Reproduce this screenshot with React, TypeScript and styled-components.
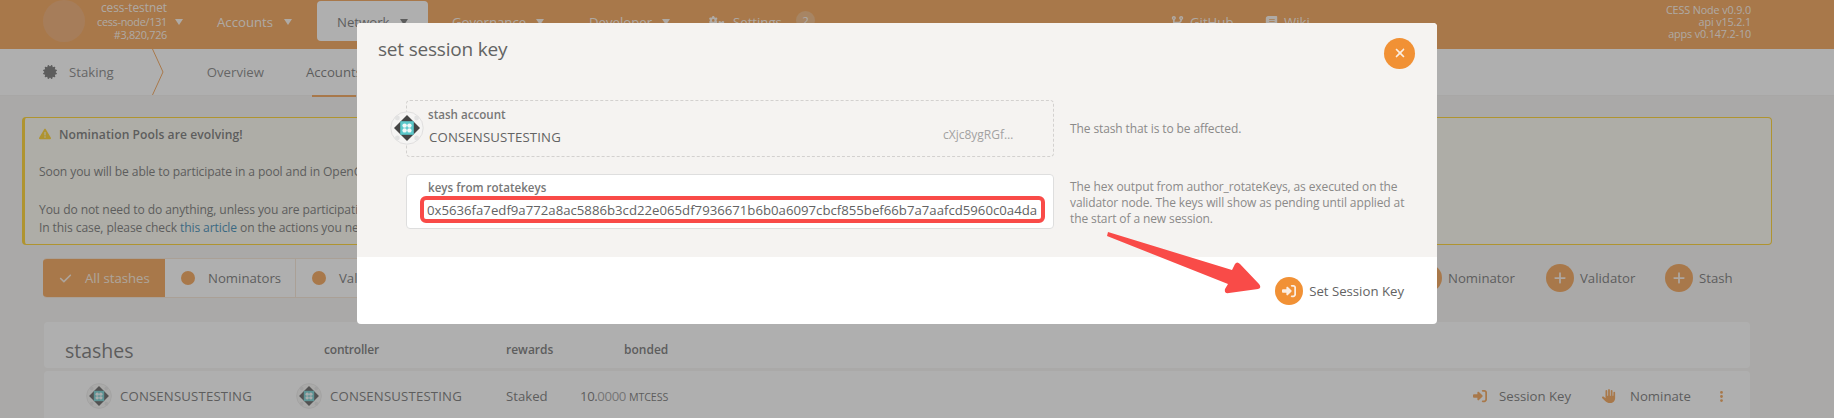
import React from 'react';
import styled, { createGlobalStyle } from 'styled-components';
import {
  FaCheck, FaCodeBranch, FaBook, FaGears, FaCertificate, FaTriangleExclamation,
  FaRightToBracket, FaHand, FaEllipsisVertical, FaPlus, FaXmark,
} from 'react-icons/fa6';

const orange = '#f19135';

const GlobalStyle = createGlobalStyle`
  * { box-sizing: border-box; }
  body {
    margin: 0;
    font-family: 'Open Sans', 'Noto Sans', sans-serif;
    font-size: 13.2px;
    color: #5a5a5a;
    background: #f5f3f1;
    overflow: hidden;
  }
  svg { display: block; flex: none; }
`;

const Page = styled.div`
  position: relative;
  width: 1834px;
  height: 418px;
  overflow: hidden;
  background: #f5f3f1;
  white-space: nowrap;
`;

const Label = styled.span<{ $w?: number; $ls?: number; $size?: number; $bold?: boolean }>`
  flex: none;
  width: ${p => (p.$w ? `${p.$w}px` : 'auto')};
  letter-spacing: ${p => p.$ls ?? 0}px;
  font-size: ${p => p.$size ?? 13.2}px;
  font-weight: ${p => (p.$bold ? 600 : 400)};
`;

/* ---- top bar ---- */
const TopBar = styled.header`
  display: flex;
  height: 49px;
  padding-left: 43px;
  background: ${orange};
  color: rgba(255, 255, 255, 0.9);
`;
const Logo = styled.div`
  width: 42px;
  height: 42px;
  border-radius: 50%;
  background: #ed9b55;
`;
const ChainInfo = styled.div`
  width: 82px;
  padding-top: 1px;
  text-align: right;
  font-size: 10.9px;
  letter-spacing: -0.3px;
  line-height: 13.5px;
`;
const ChainName = styled.div`
  font-size: 11.8px;
  letter-spacing: 0;
`;
const Nav = styled.nav`
  display: flex;
  flex: 1;
  height: 43px;
  padding-top: 1px;
`;
const NavItem = styled.div<{ $ml?: number; $w?: number; $gap?: number; $active?: boolean }>`
  display: flex;
  align-items: center;
  gap: ${p => p.$gap ?? 0}px;
  height: ${p => (p.$active ? 40 : 42)}px;
  margin-left: ${p => p.$ml ?? 0}px;
  width: ${p => (p.$w ? `${p.$w}px` : 'auto')};
  padding-left: ${p => (p.$active ? 20 : 0)}px;
  padding-top: ${p => (p.$active ? 2 : 0)}px;
  border-radius: 4px;
  background: ${p => (p.$active ? '#fff' : 'transparent')};
  color: ${p => (p.$active ? '#5a5a5a' : 'inherit')};
`;
const Caret = styled.i`
  flex: none;
  border: solid transparent;
  border-width: 6px 4.5px 0;
  border-top-color: currentColor;
`;
const Badge = styled.span`
  width: 19px;
  height: 19px;
  margin: -4px 0 0 6px;
  border-radius: 50%;
  background: #eeab68;
  font-size: 11.5px;
  line-height: 19px;
  text-align: center;
`;
const Versions = styled.div`
  width: 120px;
  margin-right: 83px;
  padding-top: 4px;
  text-align: right;
  font-size: 10.8px;
  letter-spacing: -0.13px;
  line-height: 12px;
`;

/* ---- tabs ---- */
const TabBar = styled.div`
  display: flex;
  align-items: center;
  height: 47px;
  padding-left: 43px;
  background: #fff;
  border-bottom: 1px solid #f0eeec;
`;
const Tab = styled.div<{ $ml: number; $active?: boolean }>`
  position: relative;
  margin-left: ${p => p.$ml}px;
  color: ${p => (p.$active ? '#5a5a5a' : '#6b6b6b')};
  line-height: 46px;
  &::after {
    content: '';
    display: ${p => (p.$active ? 'block' : 'none')};
    position: absolute;
    left: 6px;
    right: 6px;
    bottom: -2px;
    height: 2px;
    background: ${orange};
  }
`;

/* ---- warning ---- */
const Banner = styled.article`
  width: 1750px;
  height: 128px;
  margin: 21px 0 0 22px;
  padding: 7px 0 0 14px;
  border: 1px solid #ffc800;
  border-left-width: 3px;
  border-radius: 4px;
  background: #fcfaee;
  font-size: 12.1px;
`;
const BannerLine = styled.p<{ $gap?: number }>`
  display: flex;
  align-items: center;
  height: 18px;
  margin: ${p => p.$gap ?? 0}px 0 0;
  letter-spacing: -0.11px;
  white-space: pre;
`;
const Link = styled.a`
  color: #1373a5;
`;

/* ---- filters ---- */
const Toolbar = styled.div`
  display: flex;
  align-items: center;
  justify-content: space-between;
  height: 40px;
  margin: 13px 102px 0 43px;
`;
const Filters = styled.div`
  display: flex;
  height: 40px;
  border-radius: 4px;
  border: solid #f5e0cc;
  border-width: 1px 1px 1px 0;
  background: #fff;
  overflow: hidden;
`;
const Filter = styled.div<{ $w: number; $on?: boolean }>`
  display: flex;
  align-items: center;
  gap: 13px;
  width: ${p => p.$w}px;
  padding-left: 16px;
  border-right: ${p => (p.$on ? 0 : 1)}px solid #f5e0cc;
  background: ${p => (p.$on ? orange : '#fff')};
  color: ${p => (p.$on ? '#fbe9d8' : 'inherit')};
`;
const Dot = styled.i`
  width: 14px;
  height: 14px;
  border-radius: 50%;
  background: ${orange};
`;
const Actions = styled.div`
  display: flex;
`;
const Action = styled.div<{ $w: number }>`
  display: flex;
  align-items: center;
  gap: 6px;
  width: ${p => p.$w}px;
`;
const RoundIcon = styled.span<{ $size?: number }>`
  display: flex;
  flex: none;
  align-items: center;
  justify-content: center;
  width: ${p => p.$size ?? 28}px;
  height: ${p => p.$size ?? 28}px;
  border-radius: 50%;
  background: ${orange};
  color: #fbeee2;
`;

/* ---- table ---- */
const TableRow = styled.div<{ $h: number; $mt: number; $pl: number; $pt?: number }>`
  display: flex;
  align-items: center;
  width: 1706px;
  height: ${p => p.$h}px;
  margin: ${p => p.$mt}px 0 0 44px;
  padding: ${p => p.$pt ?? 0}px 0 0 ${p => p.$pl}px;
  border-radius: 4px;
  background: #fff;
`;
const TableTitle = styled.h1`
  width: 259px;
  margin: 2px 0 0;
  font-size: 19.5px;
  font-weight: 400;
`;
const Account = styled.div`
  display: flex;
  align-items: center;
  gap: 8px;
  width: 210px;
  letter-spacing: 0.16px;
`;
const Accent = styled.span<{ $ml?: number; $w: number }>`
  display: flex;
  width: ${p => p.$w}px;
  margin-left: ${p => p.$ml ?? 0}px;
  color: ${orange};
`;
const Amount = styled.div`
  display: flex;
  align-items: baseline;
  width: 88px;
  margin-left: 73px;
  letter-spacing: -0.4px;
`;
const Light = styled.span`
  opacity: 0.7;
`;
const Unit = styled.span`
  margin-left: 3px;
  font-size: 10.7px;
  letter-spacing: -0.1px;
`;

/* ---- modal ---- */
const Overlay = styled.div`
  position: absolute;
  inset: 0;
  padding: 23px 0 0 357px;
  background: rgba(96, 96, 96, 0.5);
`;
const Modal = styled.section`
  position: relative;
  width: 1080px;
  height: 301px;
  border-radius: 4px;
  background: #fff;
  color: #636363;
  overflow: hidden;
`;
const ModalBody = styled.div`
  height: 234px;
  background: #f5f3f1;
`;
const ModalHead = styled.div`
  display: flex;
  justify-content: space-between;
  align-items: center;
  height: 77px;
  padding: 0 22px 17px 21px;
`;
const ModalTitle = styled.h1`
  margin: 0 0 9px;
  font-size: 19px;
  font-weight: 400;
  letter-spacing: -0.2px;
`;
const FieldRow = styled.div`
  display: flex;
  align-items: center;
  margin: 0 0 17px 49px;
`;
const Field = styled.div<{ $dashed?: boolean; $h: number }>`
  position: relative;
  width: 648px;
  height: ${p => p.$h}px;
  padding: ${p => (p.$dashed ? 5 : 4)}px 0 0 20px;
  border: 1px ${p => (p.$dashed ? 'dashed #d3d1cf' : 'solid #dedede')};
  border-radius: 4px;
  background: ${p => (p.$dashed ? 'transparent' : '#fff')};
`;
const FieldName = styled.div`
  height: 18px;
  padding-left: 1px;
  color: #777;
  font-size: 11.6px;
  font-weight: 600;
  line-height: 18px;
`;
const FieldValue = styled.div<{ $pl?: number }>`
  display: flex;
  align-items: center;
  height: 26px;
  padding-left: ${p => p.$pl ?? 0}px;
`;
const Address = styled.span`
  margin-bottom: 5px;
  color: #a3a2a1;
  font-size: 12px;
`;
const FieldAvatar = styled.span`
  position: absolute;
  left: -17px;
  top: 10px;
`;
const Highlight = styled.div`
  position: absolute;
  left: 13px;
  top: 21px;
  width: 625px;
  height: 27px;
  border: 4px solid #f94b48;
  border-radius: 6px;
`;
const Help = styled.div<{ $mt?: number }>`
  margin: ${p => p.$mt ?? 0}px 0 0 16px;
  color: #8b8a89;
  font-size: 12px;
  letter-spacing: -0.11px;
  line-height: 16px;
`;
const ModalFoot = styled.div`
  display: flex;
  align-items: center;
  justify-content: flex-end;
  gap: 6px;
  height: 67px;
  padding-right: 33px;
`;
const Arrow = styled.svg`
  position: absolute;
  left: 745px;
  top: 205px;
`;

function Identicon({ size }: { size: number }) {
  return (
    <svg width={size} height={size} viewBox="0 0 34 34">
      <circle cx="17" cy="17" r="16.2" fill="#f5f4f3" stroke="#dedddc" strokeWidth="0.9" />
      <g fill="#e2e2e2">
        <circle cx="7.4" cy="7" r="2.4" /><circle cx="26.6" cy="7" r="2.4" />
        <circle cx="7.4" cy="27" r="2.4" /><circle cx="26.6" cy="27" r="2.4" />
      </g>
      <path d="M17 4 30 17 17 30 4 17Z" fill="#444" />
      <rect x="10.2" y="10.2" width="13.6" height="13.6" fill="#5bc8ca" />
      <g fill="#f1f8f8">
        <circle cx="14.6" cy="14.6" r="2.2" /><circle cx="19.4" cy="14.6" r="2.2" />
        <circle cx="14.6" cy="19.4" r="2.2" /><circle cx="19.4" cy="19.4" r="2.2" />
      </g>
    </svg>
  );
}

export default function App() {
  return (
    <Page>
      <GlobalStyle />
      <TopBar>
        <Logo />
        <ChainInfo>
          <ChainName>cess-testnet</ChainName>
          <div>cess-node/131</div>
          <div>#3,820,726</div>
        </ChainInfo>
        <Nav>
          <NavItem $ml={8} $w={42}><Caret /></NavItem>
          <NavItem $w={100}><Label $w={67}>Accounts</Label><Caret /></NavItem>
          <NavItem $active $w={111}><Label $w={63}>Network</Label><Caret /></NavItem>
          <NavItem $ml={24} $w={137}><Label $w={84}>Governance</Label><Caret /></NavItem>
          <NavItem $w={120}><Label $w={73}>Developer</Label><Caret /></NavItem>
          <NavItem $w={462} $gap={7}><FaGears size={17} /><Label $w={50}>Settings</Label><Badge>2</Badge></NavItem>
          <NavItem $w={94} $gap={6}><FaCodeBranch size={13} /><Label>GitHub</Label></NavItem>
          <NavItem $gap={6}><FaBook size={13} /><Label>Wiki</Label></NavItem>
        </Nav>
        <Versions>
          <div>CESS Node v0.9.0</div>
          <div>api v15.2.1</div>
          <div>apps v0.147.2-10</div>
        </Versions>
      </TopBar>
      <TabBar>
        <FaCertificate size={14} />
        <Tab $ml={12}>Staking</Tab>
        <Tab $ml={38}>
          <svg width="12" height="46" viewBox="0 0 12 46"><path d="M0.5 0 11 23 0.5 46" fill="none" stroke={orange} /></svg>
        </Tab>
        <Tab $ml={43}>Overview</Tab>
        <Tab $ml={42} $active>Accounts</Tab>
      </TabBar>
      <Banner>
        <BannerLine>
          <Accent $w={20}><FaTriangleExclamation size={12} color="#ffc800" /></Accent>
          <Label $bold $size={12.1} $ls={0.07}>Nomination Pools are evolving!</Label>
        </BannerLine>
        <BannerLine $gap={19}>Soon you will be able to participate in a pool and in OpenGov at the same time.</BannerLine>
        <BannerLine $gap={20}>You do not need to do anything, unless you are participating in both.</BannerLine>
        <BannerLine>In this case, please check <Link>this article</Link> on the actions you need to take.</BannerLine>
      </Banner>
      <Toolbar>
        <Filters>
          <Filter $w={122} $on><FaCheck size={13} />All stashes</Filter>
          <Filter $w={131}><Dot />Nominators</Filter>
          <Filter $w={131}><Dot />Validators</Filter>
        </Filters>
        <Actions>
          <Action $w={132}><RoundIcon><FaPlus size={14} /></RoundIcon>Nominator</Action>
          <Action $w={119}><RoundIcon><FaPlus size={14} /></RoundIcon>Validator</Action>
          <Action $w={67}><RoundIcon><FaPlus size={14} /></RoundIcon>Stash</Action>
        </Actions>
      </Toolbar>
      <TableRow $h={46} $mt={24} $pl={21} $pt={9}>
        <TableTitle>stashes</TableTitle>
        <Label $bold $size={12} $w={182} $ls={-0.2}>controller</Label>
        <Label $bold $size={12} $w={118}>rewards</Label>
        <Label $bold $size={12}>bonded</Label>
      </TableRow>
      <TableRow $h={50} $mt={3} $pl={42}>
        <Account><Identicon size={26} />CONSENSUSTESTING</Account>
        <Account><Identicon size={26} />CONSENSUSTESTING</Account>
        <Label $w={1}>Staked</Label>
        <Amount>10.<Light>0000</Light><Unit>MTCESS</Unit></Amount>
        <Accent $w={26} $ml={805}><FaRightToBracket size={14} /></Accent>
        <Label $w={103}>Session Key</Label>
        <Accent $w={28}><FaHand size={14} /></Accent>
        <Label $w={85}>Nominate</Label>
        <Accent $w={12}><FaEllipsisVertical size={13} /></Accent>
      </TableRow>

      <Overlay>
        <Modal>
          <ModalBody>
            <ModalHead>
              <ModalTitle>set session key</ModalTitle>
              <RoundIcon $size={31}><FaXmark size={14} /></RoundIcon>
            </ModalHead>
            <FieldRow>
              <Field $dashed $h={57}>
                <FieldAvatar><Identicon size={34} /></FieldAvatar>
                <FieldName>stash account</FieldName>
                <FieldValue $pl={2}>
                  <Label $w={514} $ls={0.16}>CONSENSUSTESTING</Label>
                  <Address>cXjc8ygRGf…</Address>
                </FieldValue>
              </Field>
              <Help>The stash that is to be affected.</Help>
            </FieldRow>
            <FieldRow>
              <Field $h={55}>
                <FieldName>keys from rotatekeys</FieldName>
                <FieldValue>0x5636fa7edf9a772a8ac5886b3cd22e065df7936671b6b0a6097cbcf855bef66b7a7aafcd5960c0a4da</FieldValue>
                <Highlight />
              </Field>
              <Help $mt={2}>
                The hex output from author_rotateKeys, as executed on the<br />
                validator node. The keys will show as pending until applied at<br />
                the start of a new session.
              </Help>
            </FieldRow>
          </ModalBody>
          <ModalFoot>
            <RoundIcon><FaRightToBracket size={14} /></RoundIcon>
            <Label>Set Session Key</Label>
          </ModalFoot>
          <Arrow width="170" height="70" viewBox="0 0 170 70">
            <path d="M6 4 130 42 133 36Q135 33 138 36L157 56Q160 60 156 61L127 65Q122 66 123 61L126 56 5 8Z" fill="#f94b48" />
          </Arrow>
        </Modal>
      </Overlay>
    </Page>
  );
}
